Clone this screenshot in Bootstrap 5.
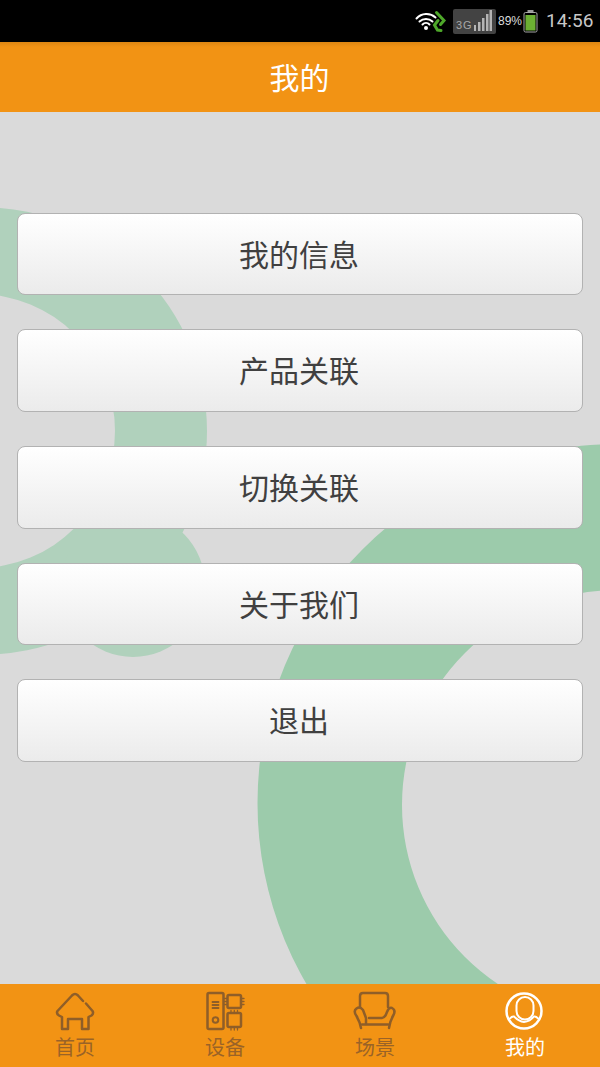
<!DOCTYPE html>
<html lang="zh-CN">
<head>
    <meta charset="UTF-8">
    <meta name="viewport" content="width=device-width, initial-scale=1.0">
    <title>我的</title>
    <link href="https://cdn.jsdelivr.net/npm/bootstrap@5.3.2/dist/css/bootstrap.min.css" rel="stylesheet">
    <style>
        body {
            background: #dadada;
            font-family: "Liberation Sans", "Noto Sans CJK SC", sans-serif;
            overflow: hidden;
        }

        .app-shell {
            height: 1067px;
        }

        /* Status bar */
        .status-strip {
            height: 42px;
            background: #000;
            padding-right: 7px;
        }

        .net-box {
            width: 43px;
            height: 25px;
            margin-left: 6px;
            background: #434343;
            border-radius: 2px;
            padding: 0 4px 3px 3px;
        }

        .net-label {
            font-size: 11px;
            line-height: 11px;
            color: #a8a8a8;
            letter-spacing: 1px;
        }

        .level-text {
            width: 26px;
            margin-left: 1px;
            font-size: 12px;
            color: #dcdcdc;
        }

        .clock-text {
            width: 47px;
            margin-left: 8px;
            font-family: Roboto, "Liberation Sans", sans-serif;
            font-size: 19px;
            color: #c8c8c8;
        }

        /* Title bar */
        .title-strip {
            height: 70px;
            padding: 2px 1px 0 0;
            background: linear-gradient(#dd8612, #f29314 5px);
            color: #fff;
            font-size: 30px;
        }

        /* Body with the two background rings */
        .menu-area {
            padding: 100.6px 17px 0;
        }

        .ring-art {
            top: 0;
            left: 0;
            width: 600px;
            height: 872px;
        }

        .menu-stack {
            gap: 34px;
        }

        .menu-btn {
            height: 82.7px;
            padding: 3px 2px 0 0;
            border: 1px solid #b2b2b2;
            border-radius: 8px;
            background: linear-gradient(#fff, #ebebeb);
            color: #404040;
            font-size: 30px;
            line-height: 78px;
        }

        /* Bottom tabs */
        .tab-strip {
            height: 83px;
            background: #f29314;
        }

        .tab-item {
            width: 150px;
            padding-top: 7px;
            color: #9a6327;
            font-size: 20px;
            line-height: 26px;
        }

        .tab-item svg {
            display: block;
            margin-bottom: 4px;
            fill: none;
            stroke: #8f5e28;
            stroke-width: 2.5;
            stroke-linecap: round;
            stroke-linejoin: round;
        }

        .tab-item.is-current {
            color: #fff;
        }

        .tab-item.is-current svg {
            stroke: #fff;
        }
    </style>
</head>
<body>

    <div class="app-shell d-flex flex-column">

        <div class="status-strip d-flex justify-content-end align-items-center flex-shrink-0">
            <svg width="32" height="24" viewBox="0 0 32 24" fill="none" stroke-linecap="round">
                <circle cx="11" cy="19" r="2" fill="#fff"/>
                <path d="M7.5 15.5a5 5 0 0 1 7 0M4.500 12.500a9.500 9.500 0 0 1 13 0M1.500 9.500a13.500 13.500 0 0 1 19 -1" stroke="#fff" stroke-width="2"/>
                <path d="M21.500 3.500L29 11.500L25.500 15.500M26 21.500L22.500 21L19.500 16L23 11.500" stroke="#4ea82a" stroke-width="3"/>
            </svg>
            <div class="net-box d-flex align-items-end justify-content-between">
                <span class="net-label">3G</span>
                <svg width="18" height="21" viewBox="0 0 18 21" fill="#b4b4b4">
                    <rect x="0" y="15" width="2" height="6"/>
                    <rect x="4" y="12" width="2.500" height="9"/>
                    <rect x="8" y="8" width="2.500" height="13"/>
                    <rect x="12" y="4" width="2.500" height="17"/>
                    <rect x="15.500" y="0" width="2.500" height="21"/>
                </svg>
            </div>
            <span class="level-text text-center">89%</span>
            <svg width="15" height="23" viewBox="0 0 15 23">
                <rect x="4.500" y="0" width="6" height="2.500" fill="#9a9a9a"/>
                <rect x="1" y="2.500" width="13" height="19.500" rx="1.500" fill="none" stroke="#a8a8a8"/>
                <rect x="2.500" y="5" width="10" height="15.500" fill="#6cb033"/>
            </svg>
            <span class="clock-text text-end">14:56</span>
        </div>

        <div class="title-strip d-flex justify-content-center align-items-center flex-shrink-0">我的</div>

        <div class="menu-area position-relative flex-grow-1">
            <svg class="ring-art position-absolute" viewBox="0 112 600 872">
                <g fill="#b0d1bc">
                    <path fill-rule="evenodd" d="M-240.200 431a223.600 223.600 0 1 0 447.200 0a223.600 223.600 0 1 0 -447.200 0ZM-159 431a137 137 0 1 0 274 0a137 137 0 1 0 -274 0Z"/>
                    <circle cx="133" cy="585" r="72"/>
                </g>
                <path fill="#9ccbab" fill-rule="evenodd" d="M257.500 803a359 359 0 1 0 718 0a359 359 0 1 0 -718 0ZM402 805a215 215 0 1 0 430 0a215 215 0 1 0 -430 0Z"/>
            </svg>
            <div class="menu-stack d-grid position-relative">
                <button type="button" class="btn menu-btn">我的信息</button>
                <button type="button" class="btn menu-btn">产品关联</button>
                <button type="button" class="btn menu-btn">切换关联</button>
                <button type="button" class="btn menu-btn">关于我们</button>
                <button type="button" class="btn menu-btn">退出</button>
            </div>
        </div>

        <div class="tab-strip d-flex flex-shrink-0">
            <div class="tab-item d-flex flex-column align-items-center">
                <svg width="44" height="40" viewBox="0 0 44 40">
                    <path d="M30 10L25 4.500Q22 1.500 19 4.500L4.500 20Q3 22.500 6 24.500L9 26V38H15V28H29V38H35.500V26L38.500 24.500Q41 22.500 39.500 20L33 12.500"/>
                </svg>
                <span>首页</span>
            </div>
            <div class="tab-item d-flex flex-column align-items-center">
                <svg width="44" height="40" viewBox="0 0 44 40">
                    <rect x="4.500" y="2" width="16" height="36" rx="1.500"/>
                    <path d="M9.500 11H15.500M9.500 14H15.500M9.500 17H15.500" stroke-width="1.800"/>
                    <circle cx="12.500" cy="29" r="2.800" stroke-width="2"/>
                    <rect x="24.500" y="4" width="13.500" height="13" rx="1.500"/>
                    <rect x="24.500" y="22" width="13.500" height="14" rx="1.500"/>
                    <path d="M21.500 7.500H24M21.500 10.500H24M21.500 13.500H24M38.500 7.500H41M38.500 10.500H41M38.500 13.500H41M28 19.500V22M31.300 19.500V22M34.500 19.500V22M28 36.500V39M31.300 36.500V39M34.500 36.500V39" stroke-width="1.300"/>
                </svg>
                <span>设备</span>
            </div>
            <div class="tab-item d-flex flex-column align-items-center">
                <svg width="44" height="40" viewBox="0 0 44 40">
                    <path d="M7 16V5Q7 2 10 2H32Q35 2 35 5V16"/>
                    <path d="M8 37Q7 31 3.500 25Q0 20 3.500 17.500Q7 15 10 19L13 27V33"/>
                    <path d="M16 27H29Q32 27 34 21Q36 16 39 17Q43 19 40.500 24Q37 30 36 37"/>
                    <path d="M9 33.500H35"/>
                </svg>
                <span>场景</span>
            </div>
            <div class="tab-item is-current d-flex flex-column align-items-center">
                <svg width="44" height="40" viewBox="0 0 44 40">
                    <circle cx="21" cy="20" r="17.500"/>
                    <rect x="13.500" y="6" width="17" height="22.500" rx="8.500" stroke-width="2"/>
                    <path d="M7 27.500Q9 25 11 25.500Q16 30.500 21 31Q27 30.500 31 25.500Q33 25 35 27.500" stroke-width="2"/>
                </svg>
                <span>我的</span>
            </div>
        </div>

    </div>

    <script src="https://cdn.jsdelivr.net/npm/bootstrap@5.3.2/dist/js/bootstrap.bundle.min.js"></script>
</body>
</html>
